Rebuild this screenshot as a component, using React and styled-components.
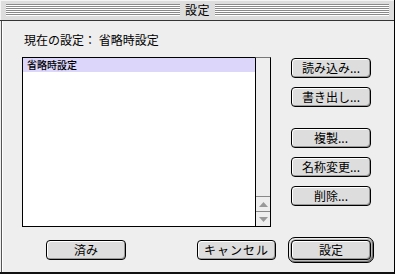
import React from "react";
import styled, { createGlobalStyle } from "styled-components";

const Global = createGlobalStyle`
  html, body { margin: 0; padding: 0; background: #ffffff; }
  body { font-family: "Noto Sans CJK JP", "Noto Sans", sans-serif; }
`;

const Page = styled.div`
  width: 397px;
  height: 278px;
  position: relative;
  overflow: hidden;
  background: #fff;
`;

const Window = styled.div`
  width: 395px;
  height: 274px;
  box-sizing: border-box;
  display: flex;
  flex-direction: column;
  border-right: 1px solid #000;
  border-bottom: 2px solid #111;
  background: #eeeeee;
`;

const TitleBar = styled.div`
  height: 21px;
  box-sizing: border-box;
  display: flex;
  align-items: center;
  padding: 0 5px 1px 6px;
  background: #dddddd;
  border-bottom: 1px solid #333;
  box-shadow: inset 1px 1px 0 #f4f4f4;
`;

const Stripes = styled.div`
  flex: 1;
  height: 12px;
  background: repeating-linear-gradient(
    to bottom,
    #8a8a8a 0 1px,
    #ffffff 1px 2px
  );
`;

const Title = styled.div`
  padding: 0 5px;
  font-size: 12px;
  line-height: 14px;
  color: #000;
  letter-spacing: 0.5px;
`;

const Body = styled.div`
  flex: 1;
  display: flex;
  flex-direction: column;
  padding: 11px 0 0 20px;
  border-left: 1px solid #555;
  margin-left: 1px;
  box-shadow: inset 1px 0 0 #fff;
`;

const Label = styled.div`
  font-size: 12px;
  line-height: 16px;
  height: 16px;
  margin-left: 2px;
  color: #000;
`;

const MiddleRow = styled.div`
  display: flex;
  margin-top: 9px;
`;

const ListFrame = styled.div`
  display: flex;
  width: 249px;
  height: 170px;
`;

const ListArea = styled.div`
  flex: 1;
  box-sizing: border-box;
  border: 1px solid #000;
  border-right: none;
  background: #fff;
  display: flex;
  flex-direction: column;
`;

const ListItem = styled.div`
  height: 14px;
  line-height: 14px;
  padding-left: 4px;
  font-size: 10px;
  font-weight: 500;
  color: #000;
  background: ${(p) => (p.$selected ? "#dcd6fb" : "transparent")};
`;

const Scrollbar = styled.div`
  width: 16px;
  box-sizing: border-box;
  display: flex;
  flex-direction: column;
  border: 1px solid #000;
  border-top: 1px solid #777;
  background: #eeeeee;
`;

const Track = styled.div`
  flex: 1;
`;

const ArrowBox = styled.div`
  height: 15px;
  box-sizing: border-box;
  border-top: 1px solid #888;
  display: flex;
  align-items: center;
  justify-content: center;
`;

const SideButtons = styled.div`
  display: flex;
  flex-direction: column;
  gap: 21px;
  margin-left: 20px;
  padding-top: 1px;
`;

const ButtonGroup = styled.div`
  display: flex;
  flex-direction: column;
  gap: 9px;
`;

const Button = styled.button`
  width: ${(p) => p.$w || 80}px;
  height: 20px;
  box-sizing: border-box;
  padding: 0;
  margin: 0;
  border: 1px solid #000;
  border-radius: 4px;
  background: #dddddd;
  box-shadow: inset 1px 1px 0 #ffffff, inset -1px -1px 0 #999999;
  font-family: "Noto Sans CJK JP", "Noto Sans", sans-serif;
  font-size: 12px;
  line-height: 16px;
  color: #000;
  letter-spacing: ${(p) => p.$ls || 0}px;
  display: flex;
  align-items: center;
  justify-content: center;
`;

const DefaultRing = styled.div`
  padding: 2px;
  border: 1px solid #000;
  border-radius: 7px;
  background: #bbbbbb;
  box-shadow: inset 1px 1px 0 #eeeeee, inset -1px -1px 0 #777777;
  display: flex;
`;

const BottomRow = styled.div`
  display: flex;
  align-items: center;
  margin-top: 10px;
  padding-left: 24px;
`;

const Spacer = styled.div`
  width: ${(p) => p.$w}px;
`;

const Arrow = ({ down }) => (
  <svg width="9" height="5" viewBox="0 0 9 5">
    <polygon
      points={down ? "0,0 9,0 4.5,5" : "0,5 9,5 4.5,0"}
      fill="#999"
    />
  </svg>
);

export default function App() {
  return (
    <Page>
      <Global />
      <Window>
        <TitleBar>
          <Stripes />
          <Title>設定</Title>
          <Stripes />
        </TitleBar>
        <Body>
          <Label>現在の設定： 省略時設定</Label>
          <MiddleRow>
            <ListFrame>
              <ListArea>
                <ListItem $selected>省略時設定</ListItem>
              </ListArea>
              <Scrollbar>
                <Track />
                <ArrowBox>
                  <Arrow />
                </ArrowBox>
                <ArrowBox>
                  <Arrow down />
                </ArrowBox>
              </Scrollbar>
            </ListFrame>
            <SideButtons>
              <ButtonGroup>
                <Button>読み込み...</Button>
                <Button>書き出し...</Button>
              </ButtonGroup>
              <ButtonGroup>
                <Button>複製...</Button>
                <Button>名称変更...</Button>
                <Button>削除...</Button>
              </ButtonGroup>
            </SideButtons>
          </MiddleRow>
          <BottomRow>
            <Button>済み</Button>
            <Spacer $w={71} />
            <Button $w={79} $ls={1}>キャンセル</Button>
            <Spacer $w={12} />
            <DefaultRing>
              <Button>設定</Button>
            </DefaultRing>
          </BottomRow>
        </Body>
      </Window>
    </Page>
  );
}
